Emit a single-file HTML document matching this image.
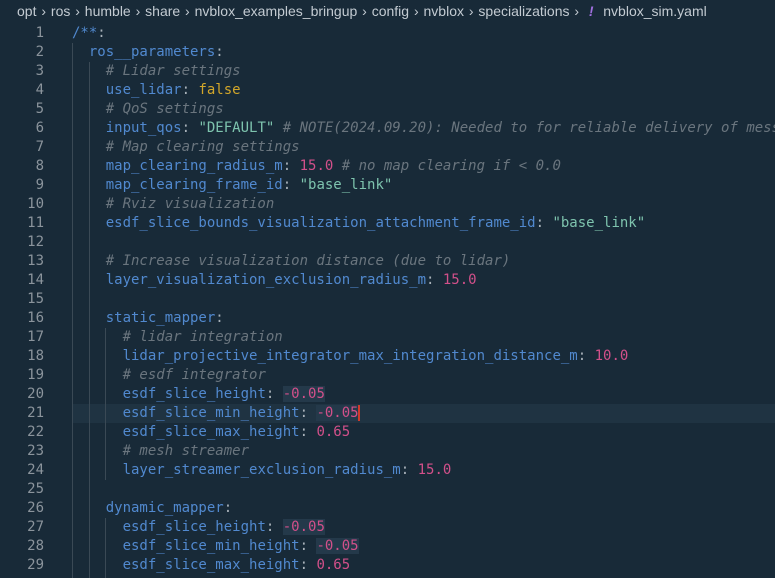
<html><head><style>
body{margin:0;width:775px;height:576px;background:#182a38;overflow:hidden;position:relative}
.bc{position:absolute;top:0;left:17px;width:758px;height:22px;font:14px "Liberation Sans",sans-serif;color:#c3cbd2;line-height:23px;white-space:pre;word-spacing:1px;overflow:hidden}
.g{position:absolute;width:1px;background:#3a4955}
.ln{position:absolute;left:0;width:44px;text-align:right;font:14px "DejaVu Sans Mono",monospace;color:#8b949c;line-height:19px}
pre{position:absolute;left:72px;top:24px;width:703px;overflow:hidden;margin:0;font:14px "DejaVu Sans Mono",monospace;line-height:19px;color:#a9b2ba}
.k{color:#5189cf}.s{color:#7ec4ae}.n{color:#d2508a}.c{color:#6a757e;font-style:italic}.y{color:#d1a62a}
.h{background:#24394a}
</style></head><body>
<div class="bc">opt &#8250; ros &#8250; humble &#8250; share &#8250; nvblox_examples_bringup &#8250; config &#8250; nvblox &#8250; specializations &#8250;  <i style="color:#a070e0;font-weight:bold">!</i>  nvblox_sim.yaml</div>
<div style="position:absolute;left:72px;top:404px;width:703px;height:19px;background:#1f3342"></div>
<div class="g" style="left:72px;top:43px;height:535px"></div>
<div class="g" style="left:89px;top:62px;height:516px"></div>
<div class="g" style="left:105px;top:328px;height:152px"></div>
<div class="g" style="left:105px;top:518px;height:60px"></div>
<div class="ln" style="top:24px">1<br>2<br>3<br>4<br>5<br>6<br>7<br>8<br>9<br>10<br>11<br>12<br>13<br>14<br>15<br>16<br>17<br>18<br>19<br>20<br>21<br>22<br>23<br>24<br>25<br>26<br>27<br>28<br>29</div>
<pre><span class="k">/**</span>:
  <span class="k">ros__parameters</span>:
    <span class="c"># Lidar settings</span>
    <span class="k">use_lidar</span>: <span class="y">false</span>
    <span class="c"># QoS settings</span>
    <span class="k">input_qos</span>: <span class="s">"DEFAULT"</span> <span class="c"># NOTE(2024.09.20): Needed to for reliable delivery of messages</span>
    <span class="c"># Map clearing settings</span>
    <span class="k">map_clearing_radius_m</span>: <span class="n">15.0</span> <span class="c"># no map clearing if &lt; 0.0</span>
    <span class="k">map_clearing_frame_id</span>: <span class="s">"base_link"</span>
    <span class="c"># Rviz visualization</span>
    <span class="k">esdf_slice_bounds_visualization_attachment_frame_id</span>: <span class="s">"base_link"</span>

    <span class="c"># Increase visualization distance (due to lidar)</span>
    <span class="k">layer_visualization_exclusion_radius_m</span>: <span class="n">15.0</span>

    <span class="k">static_mapper</span>:
      <span class="c"># lidar integration</span>
      <span class="k">lidar_projective_integrator_max_integration_distance_m</span>: <span class="n">10.0</span>
      <span class="c"># esdf integrator</span>
      <span class="k">esdf_slice_height</span>: <span class="n h">-0.05</span>
      <span class="k">esdf_slice_min_height</span>: <span class="n h">-0.05</span><span style="border-left:2px solid #d03a2a;margin-left:-1px"></span>
      <span class="k">esdf_slice_max_height</span>: <span class="n">0.65</span>
      <span class="c"># mesh streamer</span>
      <span class="k">layer_streamer_exclusion_radius_m</span>: <span class="n">15.0</span>

    <span class="k">dynamic_mapper</span>:
      <span class="k">esdf_slice_height</span>: <span class="n h">-0.05</span>
      <span class="k">esdf_slice_min_height</span>: <span class="n h">-0.05</span>
      <span class="k">esdf_slice_max_height</span>: <span class="n">0.65</span>
</pre>
</body></html>
